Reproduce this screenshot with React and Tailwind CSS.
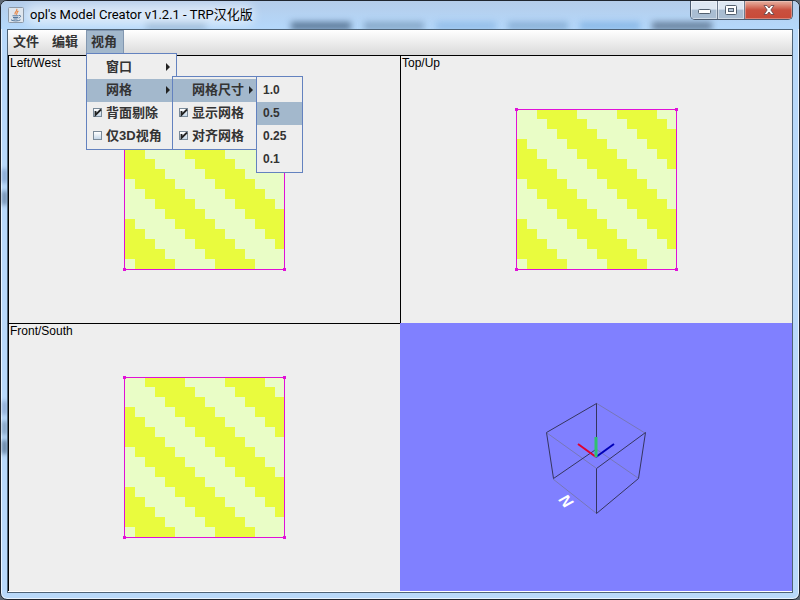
import { clsx } from "clsx";

const sizes = ["1.0", "0.5", "0.25", "0.1"];

// soft shapes of the desktop showing through the glass frame
const smudges = [
  { left: 145, tone: "bg-[#5f7f9f]/40" },
  { left: 290, tone: "bg-[#34506e]/70" },
  { left: 363, tone: "bg-[#5f7f9f]/55" },
  { left: 435, tone: "bg-[#7eaede]/60" },
  { left: 507, tone: "bg-[#5f8ab4]/50" },
  { left: 579, tone: "bg-[#5f9ad4]/50" },
  { left: 651, tone: "bg-[#34465e]/60" },
];

const edgeSmudges = [
  { top: 168, tone: "bg-[#5f7fb0]/60" },
  { top: 190, tone: "bg-[#4a6484]/70" },
  { top: 400, tone: "bg-[#7088b8]/60" },
  { top: 420, tone: "bg-[#5a7494]/60" },
  { top: 439, tone: "bg-[#34506e]/70" },
];

function JavaIcon() {
  return (
    <svg viewBox="0 0 16 16" className="relative h-4 w-4" aria-hidden="true">
      <rect x="0.5" y="0.5" width="15" height="15" rx="1" fill="#dfe6ee" stroke="#8c99a8" />
      <path d="M8.6 1.8C10.6 4 5.6 4.8 7.2 7.6M10.4 4C8.2 5.2 9.6 6 8.4 7.8" fill="none" stroke="#e8803a" strokeWidth="1.1" />
      <path d="M4.5 8.8H10.5M5 10.5H10M5.5 12H9.5" stroke="#54779c" fill="none" />
      <path d="M10.8 8.5C13.5 7.8 13 10.5 10.5 11M3 12.8C5 14.3 10.5 14.3 12.5 12.8" stroke="#54779c" fill="none" />
    </svg>
  );
}

function TitleBar() {
  return (
    <header className="relative flex h-7 items-center overflow-hidden bg-linear-to-b from-[#b5cdea] to-[#b4d8fb] pl-[7px]">
      {smudges.map((smudge) => (
        <span
          key={smudge.left}
          className={clsx("absolute top-[21px] h-2 w-[60px] blur-[3px]", smudge.tone)}
          style={{ left: smudge.left }}
        />
      ))}
      <span className="absolute top-1 left-6 h-5 w-[230px] rounded-full bg-white/50 blur-[5px]" />
      <JavaIcon />
      <h1 className="relative ml-[6px] text-[13px] leading-4 text-black">opl's Model Creator v1.2.1 - TRP汉化版</h1>
      <div className="relative mr-[6px] ml-auto flex h-[19px] self-start overflow-hidden rounded-b-[5px] border border-t-0 border-[#4c5c70]">
        <button aria-label="Minimize" className="grid w-[27px] place-items-center border-r border-[#6c7b8e] bg-linear-to-b from-[#dde7f2] from-45% to-[#a9bdd2] to-50% shadow-[inset_0_0_0_1px_#ffffff70]">
          <svg viewBox="0 0 13 6" className="mt-1 h-[6px] w-[13px]">
            <rect x="0.5" y="0.5" width="12" height="4" rx="1" fill="#fff" stroke="#53606f" />
          </svg>
        </button>
        <button aria-label="Maximize" className="grid w-[27px] place-items-center border-r border-[#6c7b8e] bg-linear-to-b from-[#dde7f2] from-45% to-[#a9bdd2] to-50% shadow-[inset_0_0_0_1px_#ffffff70]">
          <svg viewBox="0 0 12 10" className="h-[10px] w-3">
            <rect x="0.5" y="0.5" width="11" height="9" rx="1" fill="#fff" stroke="#53606f" />
            <rect x="3.5" y="3.5" width="5" height="3" fill="#b4c4d6" stroke="#53606f" />
          </svg>
        </button>
        <button aria-label="Close" className="grid w-[47px] place-items-center bg-linear-to-b from-[#e2a191] from-10% via-[#c9503f] via-50% to-[#c84a38] shadow-[inset_0_0_0_1px_#ffffff50]">
          <svg viewBox="0 0 12 10" className="h-[10px] w-3">
            <path d="M1 .5H4L6 3L8 .5H11L7.8 5L11 9.5H8L6 7L4 9.5H1L4.2 5Z" fill="#fff" stroke="#5f4148" strokeWidth=".8" />
          </svg>
        </button>
      </div>
    </header>
  );
}

function Popup({ className, children }) {
  return (
    <div role="menu" className={clsx("absolute border border-[#6382bf] bg-[#eee] pt-[2px] pb-px", className)}>
      {children}
    </div>
  );
}

function MenuItem({ label, active, arrow }) {
  return (
    <button
      role="menuitem"
      className={clsx("flex h-[23px] w-full items-center pr-[6px] pb-[2px] pl-[19px] text-left whitespace-nowrap", active && "bg-[#a3b8cc]")}
    >
      <span>{label}</span>
      {arrow && (
        <svg viewBox="0 0 4 8" className="ml-auto h-2 w-1" aria-hidden="true">
          <path d="M0 0L4 4L0 8Z" fill="#222" />
        </svg>
      )}
    </button>
  );
}

function CheckItem({ label, checked }) {
  return (
    <label className="flex h-[23px] items-center gap-1 pb-[2px] pl-[6px] whitespace-nowrap">
      <span className="relative h-[9px] w-[9px]">
        <input
          type="checkbox"
          defaultChecked={checked}
          className="peer block h-[9px] w-[9px] appearance-none border border-[#7a8a99] bg-linear-to-b from-white to-[#c5d7e8]"
        />
        <svg viewBox="0 0 9 9" className="pointer-events-none absolute inset-0 hidden h-[9px] w-[9px] peer-checked:block">
          <path d="M2.5 3V7L8 1.5" fill="none" stroke="#222" strokeWidth="1.8" />
        </svg>
      </span>
      <span>{label}</span>
    </label>
  );
}

function MenuBar() {
  return (
    <nav className="relative z-10 flex h-[25px] gap-px bg-linear-to-b from-white to-[#dadada] text-[13px] font-bold text-[#333]">
      <button className="pr-[7px] pb-[2px] pl-[5px]">文件</button>
      <button className="pr-[7px] pb-[2px] pl-[5px]">编辑</button>
      <div className="relative">
        <button className="h-full border border-b-0 border-[#8297b0] bg-[#a3b8cc] pr-[6px] pb-[2px] pl-1" aria-expanded="true">
          视角
        </button>
        <Popup className="top-[23px] left-0 w-[91px]">
          <MenuItem label="窗口" arrow />
          <div className="relative">
            <MenuItem label="网格" active arrow />
            <Popup className="-top-[3px] left-[85px] w-[88px]">
              <div className="relative">
                <MenuItem label="网格尺寸" active arrow />
                <Popup className="-top-[3px] left-[83px] w-[47px]">
                  {sizes.map((size) => (
                    <button
                      key={size}
                      role="menuitem"
                      className={clsx("block h-[23px] w-full pb-[2px] pl-[6px] text-left text-[12px]", size === "0.5" && "bg-[#a3b8cc]")}
                    >
                      {size}
                    </button>
                  ))}
                </Popup>
              </div>
              <CheckItem label="显示网格" checked />
              <CheckItem label="对齐网格" checked />
            </Popup>
          </div>
          <CheckItem label="背面剔除" checked />
          <CheckItem label="仅3D视角" />
        </Popup>
      </div>
    </nav>
  );
}

const cells = Array.from({ length: 256 }, (_, i) => ({ row: Math.floor(i / 16), col: i % 16 }));
const striped = cells.filter(({ row, col }) => (col - row + 14) % 8 < 4 && col - row + 14 >= 0);

function StripedFace() {
  return (
    <svg viewBox="0 0 163 163" className="h-[163px] w-[163px]" shapeRendering="crispEdges" aria-hidden="true">
      <rect x="1" y="1" width="161" height="161" fill="#e9fdc6" />
      {striped.map(({ row, col }) => (
        <rect key={`${row}-${col}`} x={2 + col * 10} y={1 + row * 10} width="10" height="10" fill="#e9fb3e" />
      ))}
      <path d="M1 1H162V162H1ZM2 2V161H161V2Z" fillRule="evenodd" fill="#e010d8" />
      {[0, 160].map((x) => [0, 160].map((y) => <rect key={`${x}-${y}`} x={x} y={y} width="3" height="3" fill="#e010d8" />))}
    </svg>
  );
}

function FlatView({ label }) {
  return (
    <section className="relative grid place-items-center border-t border-l border-black bg-[#eee]">
      <h2 className="absolute top-0 left-px text-[12px] leading-[14px] text-black">{label}</h2>
      <StripedFace />
    </section>
  );
}

function SceneView() {
  return (
    <section className="grid place-items-center bg-[#8080ff]">
      <svg viewBox="0 0 120 120" className="h-[120px] w-[120px]" fill="none" aria-label="3D view">
        <path d="M60 6L109 36M11 36L60 71M17 82L60 116M60 52L102 81" stroke="#7777b8" />
        <path d="M60.5 6.5V52L17.5 81.5L10.5 35.5L60.5 6.5M60.5 116.5V71.5L109.5 35.5L102.5 81.5L60.5 116.5" stroke="#35355f" />
        <path d="M60 60L42 47" stroke="#e00030" strokeWidth="2" />
        <path d="M60 60L78 47" stroke="#0000b8" strokeWidth="2" />
        <path d="M60 60V40" stroke="#30c070" strokeWidth="3" />
        <text x="30" y="104" transform="rotate(50 30 104)" textAnchor="middle" dominantBaseline="central" fill="#fff" className="text-[16px] font-bold italic">
          N
        </text>
      </svg>
    </section>
  );
}

export default function App() {
  return (
    <div className="bg-[#5d6773] font-['Liberation_Sans','Noto_Sans_CJK_SC',sans-serif]">
      <div className="relative flex min-h-screen flex-col overflow-hidden rounded-[7px] border border-[#20262f] bg-[#b9d9fa] shadow-[inset_0_0_0_1px_#ffffffb0]">
        {edgeSmudges.map((smudge) => (
          <span
            key={smudge.top}
            className={clsx("absolute left-px h-[14px] w-[5px] blur-[2px]", smudge.tone)}
            style={{ top: smudge.top }}
          />
        ))}
        <div className="font-[Roboto,'Noto_Sans_CJK_SC',sans-serif]">
          <TitleBar />
        </div>
        <main className="relative mx-[6px] mb-[6px] flex flex-1 flex-col border border-[#4f6478] bg-white pb-px">
          <MenuBar />
          <div className="grid flex-1 grid-cols-2 grid-rows-2">
            <FlatView label="Left/West" />
            <FlatView label="Top/Up" />
            <FlatView label="Front/South" />
            <SceneView />
          </div>
        </main>
      </div>
    </div>
  );
}
